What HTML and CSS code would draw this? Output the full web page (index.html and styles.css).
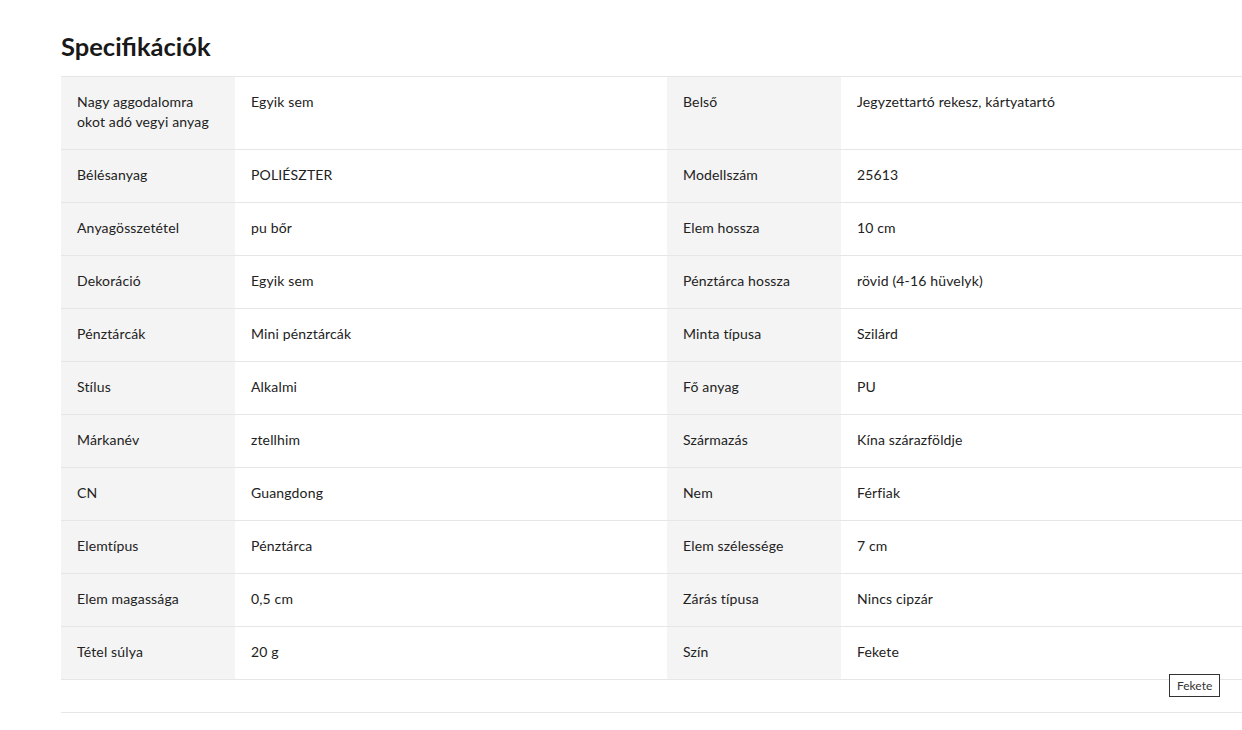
FILE: index.html
```html
<!DOCTYPE html>
<html lang="hu">
<head>
<meta charset="utf-8">
<title>Specifikációk</title>
<link rel="stylesheet" href="styles.css">
</head>
<body>
<div class="page">
  <section class="specs">
    <h2 class="specs-title">Specifikációk</h2>
    <div class="specs-table">
      <div class="row">
        <div class="cell label">Nagy aggodalomra okot adó vegyi anyag</div>
        <div class="cell value">Egyik sem</div>
        <div class="cell label">Belső</div>
        <div class="cell value">Jegyzettartó rekesz, kártyatartó</div>
      </div>
      <div class="row">
        <div class="cell label">Bélésanyag</div>
        <div class="cell value">POLIÉSZTER</div>
        <div class="cell label">Modellszám</div>
        <div class="cell value">25613</div>
      </div>
      <div class="row">
        <div class="cell label">Anyagösszetétel</div>
        <div class="cell value">pu bőr</div>
        <div class="cell label">Elem hossza</div>
        <div class="cell value">10 cm</div>
      </div>
      <div class="row">
        <div class="cell label">Dekoráció</div>
        <div class="cell value">Egyik sem</div>
        <div class="cell label">Pénztárca hossza</div>
        <div class="cell value">rövid (4-16 hüvelyk)</div>
      </div>
      <div class="row">
        <div class="cell label">Pénztárcák</div>
        <div class="cell value">Mini pénztárcák</div>
        <div class="cell label">Minta típusa</div>
        <div class="cell value">Szilárd</div>
      </div>
      <div class="row">
        <div class="cell label">Stílus</div>
        <div class="cell value">Alkalmi</div>
        <div class="cell label">Fő anyag</div>
        <div class="cell value">PU</div>
      </div>
      <div class="row">
        <div class="cell label">Márkanév</div>
        <div class="cell value">ztellhim</div>
        <div class="cell label">Származás</div>
        <div class="cell value">Kína szárazföldje</div>
      </div>
      <div class="row">
        <div class="cell label">CN</div>
        <div class="cell value">Guangdong</div>
        <div class="cell label">Nem</div>
        <div class="cell value">Férfiak</div>
      </div>
      <div class="row">
        <div class="cell label">Elemtípus</div>
        <div class="cell value">Pénztárca</div>
        <div class="cell label">Elem szélessége</div>
        <div class="cell value">7 cm</div>
      </div>
      <div class="row">
        <div class="cell label">Elem magassága</div>
        <div class="cell value">0,5 cm</div>
        <div class="cell label">Zárás típusa</div>
        <div class="cell value">Nincs cipzár</div>
      </div>
      <div class="row">
        <div class="cell label">Tétel súlya</div>
        <div class="cell value">20 g</div>
        <div class="cell label">Szín</div>
        <div class="cell value has-tip">Fekete<span class="tooltip">Fekete</span></div>
      </div>
    </div>
    <div class="specs-footer"></div>
  </section>
</div>
</body>
</html>
```

FILE: styles.css
```css
html, body {
  margin: 0;
  padding: 0;
  overflow: hidden;
  background: #fff;
}

body {
  font-family: Lato, "Open Sans", "Liberation Sans", sans-serif;
  color: #222;
  font-size: 14px;
  line-height: 20px;
}

.page {
  padding: 31px 0 0 61px;
  width: 1212px;
}

.specs-title {
  margin: 0 0 14px 0;
  font-size: 25.5px;
  line-height: 31px;
  font-weight: 700;
  color: #191919;
}

.specs-table {
  border-top: 1px solid #e6e6e6;
}

.row {
  display: grid;
  grid-template-columns: 174px 432px 174px 432px;
  border-bottom: 1px solid #e6e6e6;
}

.cell {
  padding: 15px 16px 17px 16px;
  min-height: 20px;
  letter-spacing: 0.15px;
}

.label {
  background: #f4f4f4;
  padding-right: 20px;
}

.has-tip {
  position: relative;
}

.tooltip {
  position: absolute;
  left: 328px;
  top: 47px;
  border: 1px solid #333;
  background: #fff;
  font-size: 12px;
  line-height: 15px;
  padding: 3px 7px 3px 7px;
  color: #333;
  letter-spacing: 0;
}

.specs-footer {
  height: 32px;
  border-bottom: 1px solid #e6e6e6;
}
```
